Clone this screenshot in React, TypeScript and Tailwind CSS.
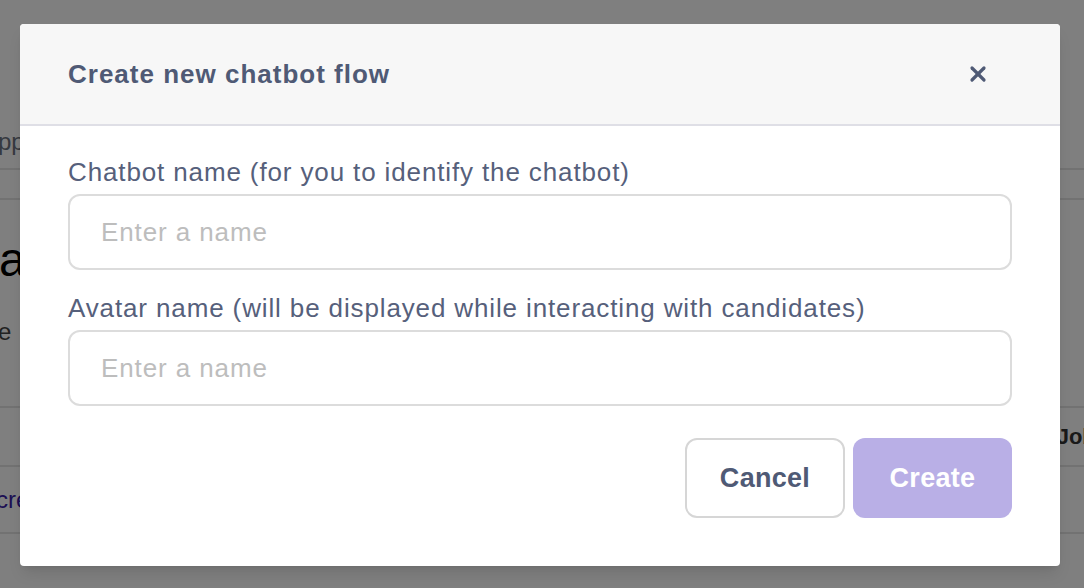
import { X } from 'lucide-react';

function BackgroundPage() {
    return (
        <div className="h-[588px] w-[1084px] overflow-hidden bg-white font-['Liberation_Sans',Arial,sans-serif]">
            <div className="flex h-[170px] items-end border-b-2 border-[#e5e5e5] pb-[8px] text-[24px] text-[#6b7280]">
                <span className="-ml-[2px]">pp</span>
            </div>
            <div className="h-[30px] border-b-2 border-[#e5e5e5]" />
            <div className="pt-[36px] text-[48px] leading-none text-black">
                <span className="-ml-[1px]">at</span>
            </div>
            <div className="pt-[30px] text-[24px] text-[#444]">
                <span className="-ml-[2px]">e</span>
            </div>
            <div className="mt-[56px] flex h-[61px] items-center justify-end border-y-2 border-[#e5e5e5] text-[22px] font-bold text-[#333]">
                <span className="-mr-[24px]">Jobs</span>
            </div>
            <div className="flex h-[67px] items-center border-b-2 border-[#e5e5e5] text-[24px] text-[#3b1fa8]">
                <span className="-ml-[4px]">create</span>
            </div>
        </div>
    );
}

export default function App() {
    return (
        <div className="relative h-[588px] w-[1084px] overflow-hidden">
            <BackgroundPage />

            <div className="absolute inset-0 flex items-start justify-start bg-black/50 pt-[24px] pl-[20px]">
                <div className="w-[1040px] overflow-hidden rounded-[4px] bg-white font-['Liberation_Sans',Arial,sans-serif] shadow-lg">
                    <div className="flex h-[102px] items-center justify-between border-b-2 border-[#dfdfe6] bg-[#f7f7f7] pl-12 pr-[70px]">
                        <h2 className="text-[26px] font-bold tracking-[1px] text-[#4f5a75]">
                            Create new chatbot flow
                        </h2>
                        <button className="text-[#4f5a75]">
                            <X size={24} strokeWidth={3.2} />
                        </button>
                    </div>

                    <div className="px-12 pt-[28px] pb-[48px]">
                        <label className="mb-1 block text-[26px] leading-[36px] tracking-[0.87px] text-[#56607b]">
                            Chatbot name (for you to identify the chatbot)
                        </label>
                        <input
                            type="text"
                            placeholder="Enter a name"
                            className="block h-[76px] w-full rounded-[12px] border-2 border-[#dcdcdc] px-[31px] text-[26px] tracking-[0.9px] text-[#333] outline-none placeholder:text-[#bdbdbd]"
                        />

                        <label className="mt-5 mb-1 block text-[26px] leading-[36px] tracking-[0.87px] text-[#56607b]">
                            Avatar name (will be displayed while interacting with candidates)
                        </label>
                        <input
                            type="text"
                            placeholder="Enter a name"
                            className="block h-[76px] w-full rounded-[12px] border-2 border-[#dcdcdc] px-[31px] text-[26px] tracking-[0.9px] text-[#333] outline-none placeholder:text-[#bdbdbd]"
                        />

                        <div className="mt-8 flex justify-end gap-2">
                            <button className="h-[80px] w-[160px] rounded-[12px] border-2 border-[#d6d6d6] bg-white text-[27px] font-bold tracking-[0.3px] text-[#4f5a75]">
                                Cancel
                            </button>
                            <button className="h-[80px] w-[159px] rounded-[12px] bg-[#b9afe6] text-[27px] font-bold tracking-[0.3px] text-white">
                                Create
                            </button>
                        </div>
                    </div>
                </div>
            </div>
        </div>
    );
}
